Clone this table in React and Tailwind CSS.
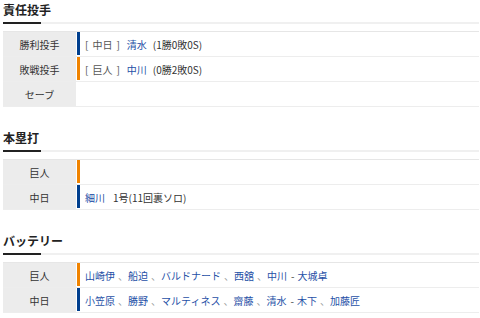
import React from 'react';

const FONT = { fontFamily: '"Noto Sans CJK JP", "Noto Sans", sans-serif' };

const BLUE = 'bg-[#003f8e]';
const ORANGE = 'bg-[#f08300]';

function Heading({ title, first }) {
  return (
    <div className={first ? 'pt-[2px]' : 'pt-[23px]'}>
      <h2 className="text-[12px] leading-[16px] font-bold text-[#222]">{title}</h2>
      <div className="flex mt-[4px]">
        <div className="w-[38px] h-[2px] bg-[#222]"></div>
        <div className="flex-1 h-[2px] bg-[#f0f0f0]"></div>
      </div>
    </div>
  );
}

function Row({ label, bar, children }) {
  return (
    <div className="flex h-[25px] border-b border-[#ededed]">
      <div className="w-[73px] bg-[#ececec] flex items-center justify-center text-[10px] text-[#333]">
        {label}
      </div>
      <div className="flex-1 flex items-stretch">
        {bar ? <div className={`ml-[1px] w-[3px] mb-[1px] ${bar}`}></div> : <div className="ml-[1px] w-[3px]"></div>}
        <div className="flex items-center pl-[5px] text-[10px] text-[#555]">{children}</div>
      </div>
    </div>
  );
}

function Table({ children }) {
  return <div className="mt-[7px] border-t border-[#e6e6e6]">{children}</div>;
}

function Team({ name }) {
  return (
    <span className="text-[#555]">
      [<span className="mx-[4px]">{name}</span>]
    </span>
  );
}

function Names({ list }) {
  return (
    <span>
      {list.map((n, i) => (
        <React.Fragment key={i}>
          {i > 0 && !n.startsWith('-') && <span className="text-[#999] ml-[3px]">、</span>}
          {n.startsWith('-') ? (
            <>
              <span className="text-[#444] ml-[4px] mr-[3px]">-</span>
              <span className="text-[#1e4fa6]">{n.slice(1)}</span>
            </>
          ) : (
            <span className="text-[#1e4fa6]">{n}</span>
          )}
        </React.Fragment>
      ))}
    </span>
  );
}

export default function App() {
  return (
    <div className="bg-white w-[480px] h-[318px] overflow-hidden pl-[3px] pr-[1px]" style={FONT}>
      <Heading title="責任投手" first />
      <Table>
        <Row label="勝利投手" bar={BLUE}>
          <Team name="中日" />
          <span className="ml-[7px] text-[#1e4fa6]">清水</span>
          <span className="ml-[6px] text-[#333]">(1勝0敗0S)</span>
        </Row>
        <Row label="敗戦投手" bar={ORANGE}>
          <Team name="巨人" />
          <span className="ml-[7px] text-[#1e4fa6]">中川</span>
          <span className="ml-[6px] text-[#333]">(0勝2敗0S)</span>
        </Row>
        <Row label="セーブ"></Row>
      </Table>

      <Heading title="本塁打" />
      <Table>
        <Row label="巨人" bar={ORANGE}></Row>
        <Row label="中日" bar={BLUE}>
          <span className="text-[#1e4fa6]">細川</span>
          <span className="ml-[8px] text-[#333]">1号(11回裏ソロ)</span>
        </Row>
      </Table>

      <Heading title="バッテリー" />
      <Table>
        <Row label="巨人" bar={ORANGE}>
          <Names list={['山崎伊', '船迫', 'バルドナード', '西舘', '中川', '-大城卓']} />
        </Row>
        <Row label="中日" bar={BLUE}>
          <Names list={['小笠原', '勝野', 'マルティネス', '齋藤', '清水', '-木下', '加藤匠']} />
        </Row>
      </Table>
    </div>
  );
}
